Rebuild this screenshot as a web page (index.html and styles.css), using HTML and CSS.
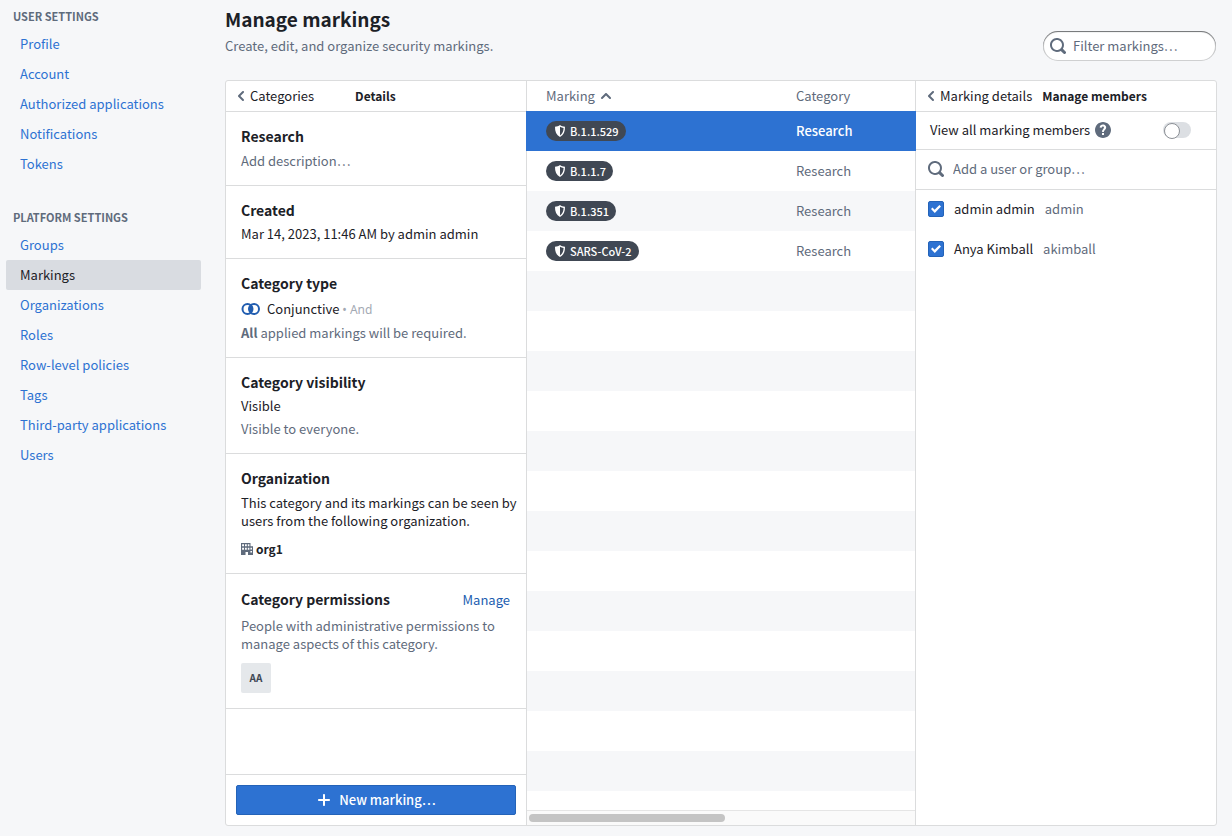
FILE: index.html
```
<!DOCTYPE html>
<html lang="en">
<head>
<meta charset="utf-8">
<title>Manage markings</title>
<link rel="stylesheet" href="styles.css">
</head>
<body>
<svg class="sprite" aria-hidden="true">
  <symbol id="i-search" viewBox="0 0 16 16"><path d="M15.55 13.43l-2.67-2.68a6.94 6.94 0 001.11-3.76c0-3.87-3.13-7-7-7s-7 3.13-7 7 3.13 7 7 7c1.39 0 2.68-.42 3.76-1.11l2.68 2.67a1.498 1.498 0 102.12-2.12zm-8.56-1.44c-2.76 0-5-2.24-5-5s2.24-5 5-5 5 2.24 5 5-2.24 5-5 5z"/></symbol>
  <symbol id="i-left" viewBox="0 0 16 16"><path d="M7.41 8l3.29-3.29c.19-.18.3-.43.3-.71a1.003 1.003 0 00-1.71-.71l-4 4C5.11 7.47 5 7.72 5 8c0 .28.11.53.29.71l4 4a1.003 1.003 0 001.42-1.42L7.41 8z"/></symbol>
  <symbol id="i-up" viewBox="0 0 16 16"><path d="M12.71 9.29l-4-4C8.53 5.11 8.28 5 8 5s-.53.11-.71.29l-4 4a1.003 1.003 0 001.42 1.42L8 7.41l3.29 3.29c.18.19.43.3.71.3a1.003 1.003 0 00.71-1.71z"/></symbol>
  <symbol id="i-plus" viewBox="0 0 16 16"><path d="M13 7H9V3c0-.55-.45-1-1-1s-1 .45-1 1v4H3c-.55 0-1 .45-1 1s.45 1 1 1h4v4c0 .55.45 1 1 1s1-.45 1-1V9h4c.55 0 1-.45 1-1s-.45-1-1-1z"/></symbol>
  <symbol id="i-help" viewBox="0 0 16 16"><path d="M8 0C3.58 0 0 3.58 0 8s3.58 8 8 8 8-3.58 8-8-3.58-8-8-8zM7 13v-2h2v2H7zm3.93-6.48c-.14.32-.35.64-.62.97L9.25 8.83c-.12.15-.24.29-.28.42-.04.13-.09.3-.09.52V10H7.12V8.88s.05-.51.21-.71L8.4 6.73c.22-.26.35-.49.44-.68.09-.19.12-.38.12-.58 0-.3-.1-.55-.28-.75-.18-.19-.44-.28-.76-.28-.33 0-.59.1-.78.29-.19.19-.33.46-.4.81-.03.11-.1.15-.2.14l-1.7-.25c-.12-.01-.16-.08-.14-.19.12-.82.46-1.47 1.03-1.94.57-.48 1.32-.72 2.25-.72.47 0 .9.07 1.29.22s.72.34 1 .59c.28.25.49.55.65.89.15.35.22.72.22 1.12s-.07.75-.21 1.08z"/></symbol>
  <symbol id="i-shield" viewBox="0 0 12 12"><path fill-rule="evenodd" d="M6 0C4.800 1 2.800 1.700 1 1.700C.8 6.500 2.400 10 6 12C9.600 10 11.200 6.500 11 1.700C9.200 1.700 7.200 1 6 0ZM6 1.800C7 2.500 8.300 2.900 9.600 3.100C9.500 6.500 8.500 8.800 6 10.400Z"/></symbol>
  <symbol id="i-join" viewBox="0 0 20 14"><path d="M9.750 2.500a6 6 0 0 1 0 9a6 6 0 0 1 0-9z"/><circle cx="6.500" cy="7" r="5" fill="none" stroke="currentColor" stroke-width="2"/><circle cx="13" cy="7" r="5" fill="none" stroke="currentColor" stroke-width="2"/></symbol>
  <symbol id="i-office" viewBox="0 0 12 12"><path fill-rule="evenodd" d="M0 0H9.500V3.200H12V12H7V9H4.500V12H0ZM1.100 1.200V3.200H3V1.200ZM4 1.200V3.200H5.800V1.200ZM6.800 1.200V3.200H8.400V1.200ZM1.100 4.800V6.800H3V4.800ZM4 4.800V6.800H5.800V4.800ZM6.800 4.800V6.800H8.400V4.800ZM9.400 4.800V6.500H11V4.800ZM9.400 8V9.500H11V8Z"/></symbol>
</svg>
<div class="page">
  <nav class="sidebar" aria-label="Settings">
    <section>
      <h2 class="nav-title">USER SETTINGS</h2>
      <a class="nav-item" href="#">Profile</a>
      <a class="nav-item" href="#">Account</a>
      <a class="nav-item" href="#">Authorized applications</a>
      <a class="nav-item" href="#">Notifications</a>
      <a class="nav-item" href="#">Tokens</a>
    </section>
    <section>
      <h2 class="nav-title">PLATFORM SETTINGS</h2>
      <a class="nav-item" href="#">Groups</a>
      <a class="nav-item current" href="#" aria-current="page">Markings</a>
      <a class="nav-item" href="#">Organizations</a>
      <a class="nav-item" href="#">Roles</a>
      <a class="nav-item" href="#">Row-level policies</a>
      <a class="nav-item" href="#">Tags</a>
      <a class="nav-item" href="#">Third-party applications</a>
      <a class="nav-item" href="#">Users</a>
    </section>
  </nav>
  <main class="main">
    <header class="page-head">
      <div>
        <h1 class="page-title">Manage markings</h1>
        <p class="muted">Create, edit, and organize security markings.</p>
      </div>
      <label class="filter">
        <svg class="icon"><use href="#i-search"/></svg>
        <input type="search" placeholder="Filter markings…" aria-label="Filter markings">
      </label>
    </header>
    <div class="frame">
      <section class="pane details">
        <header class="pane-head wide">
          <button class="back" type="button"><svg class="icon"><use href="#i-left"/></svg>Categories</button>
          <h2 class="pane-title">Details</h2>
        </header>
        <div class="details-body">
          <section class="block">
            <h3 class="block-title">Research</h3>
            <p class="muted">Add description…</p>
          </section>
          <section class="block tight">
            <h3 class="block-title">Created</h3>
            <p>Mar 14, 2023, 11:46 AM by admin admin</p>
          </section>
          <section class="block loose">
            <h3 class="block-title">Category type</h3>
            <p class="type"><svg class="join"><use href="#i-join"/></svg><span>Conjunctive <span class="faint">• And</span></span></p>
            <p class="muted"><strong>All</strong> applied markings will be required.</p>
          </section>
          <section class="block tight">
            <h3 class="block-title">Category visibility</h3>
            <p>Visible</p>
            <p class="muted">Visible to everyone.</p>
          </section>
          <section class="block">
            <h3 class="block-title">Organization</h3>
            <p>This category and its markings can be seen by users from the following organization.</p>
            <p class="org"><svg class="office"><use href="#i-office"/></svg><strong>org1</strong></p>
          </section>
          <section class="block loose">
            <div class="block-row">
              <h3 class="block-title">Category permissions</h3>
              <a class="manage" href="#">Manage</a>
            </div>
            <p class="muted">People with administrative permissions to manage aspects of this category.</p>
            <span class="avatar">AA</span>
          </section>
        </div>
        <footer class="pane-foot">
          <button class="primary" type="button"><svg class="icon"><use href="#i-plus"/></svg>New marking…</button>
        </footer>
      </section>
      <section class="pane list">
        <div class="stripes">
          <table class="markings">
            <thead>
              <tr><th class="col-marking" scope="col"><span class="sort">Marking <svg class="icon"><use href="#i-up"/></svg></span></th><th scope="col">Category</th></tr>
            </thead>
            <tbody>
              <tr class="selected"><td><span class="pill"><svg><use href="#i-shield"/></svg>B.1.1.529</span></td><td>Research</td></tr>
              <tr><td><span class="pill"><svg><use href="#i-shield"/></svg>B.1.1.7</span></td><td>Research</td></tr>
              <tr><td><span class="pill"><svg><use href="#i-shield"/></svg>B.1.351</span></td><td>Research</td></tr>
              <tr><td><span class="pill"><svg><use href="#i-shield"/></svg>SARS-CoV-2</span></td><td>Research</td></tr>
            </tbody>
          </table>
        </div>
        <div class="scroll"><div class="thumb"></div></div>
      </section>
      <section class="pane members">
        <header class="pane-head">
          <button class="back" type="button"><svg class="icon"><use href="#i-left"/></svg>Marking details</button>
          <h2 class="pane-title">Manage members</h2>
        </header>
        <div class="view-all">
          <label for="view-all">View all marking members</label>
          <svg class="icon"><use href="#i-help"/></svg>
          <input class="switch" id="view-all" type="checkbox" role="switch">
        </div>
        <label class="add">
          <svg class="icon"><use href="#i-search"/></svg>
          <input type="text" placeholder="Add a user or group…" aria-label="Add a user or group">
        </label>
        <label class="member"><input class="check" type="checkbox" checked><span>admin admin</span><span class="muted">admin</span></label>
        <label class="member"><input class="check" type="checkbox" checked><span>Anya Kimball</span><span class="muted">akimball</span></label>
      </section>
    </div>
  </main>
</div>
</body>
</html>
```
FILE: styles.css
```
* { box-sizing: border-box; }
body {
  margin: 0;
  background: #f6f7f9;
  color: #1c2127;
  font: 13px/18px "Noto Sans CJK SC", "Noto Sans CJK JP", "Noto Sans", sans-serif;
}
h1, h2, h3, p { margin: 0; }
a { text-decoration: none; }
button, input { font: inherit; color: inherit; }
button { padding: 0; border: 0; background: none; }
input::placeholder { color: #5f6b7c; opacity: 1; }
.sprite { display: none; }
.icon { width: 16px; height: 16px; flex: none; fill: #5f6b7c; }
.muted { color: #5f6b7c; }
.faint { color: #a3a9b3; font-family: "Noto Sans", sans-serif; font-size: 12px; }

.page { display: flex; min-height: 100vh; }
.sidebar {
  display: flex;
  flex-direction: column;
  gap: 28px;
  flex: none;
  width: 201px;
  padding: 6px 0 0 6px;
}
.nav-title {
  margin-bottom: 3px;
  padding-left: 7px;
  color: #5f6b7c;
  font-size: 11px;
  line-height: 20px;
}
.nav-item {
  display: block;
  padding-left: 14px;
  border-radius: 2px;
  color: #2d72d2;
  line-height: 30px;
}
.nav-item.current { background: #d9dce1; color: #1c2127; }

.main {
  display: flex;
  flex-direction: column;
  flex: 1;
  min-width: 0;
  padding: 0 15px 10px 24px;
}
.page-head { display: flex; justify-content: space-between; height: 80px; padding-top: 5px; }
.page-title { margin-bottom: 4px; font-size: 19px; line-height: 28px; }
.filter {
  display: flex;
  align-items: center;
  gap: 7px;
  width: 173px;
  height: 30px;
  margin: 26px 1px 0 0;
  padding: 0 7px;
  border-radius: 15px;
  background: #fff;
  box-shadow: inset 0 0 0 1px rgba(17, 20, 24, .2), inset 0 1px 1px rgba(17, 20, 24, .5);
}
.filter input, .add input {
  flex: 1;
  min-width: 0;
  padding: 0;
  border: 0;
  outline: 0;
  background: none;
}

.frame {
  display: flex;
  flex: 1;
  border: 1px solid #dbdcdd;
  border-radius: 3px;
  background: #fff;
}
.pane { display: flex; flex-direction: column; }
.details { flex: none; width: 301px; border-right: 1px solid #dbdcdd; }
.list { position: relative; flex: 1; min-width: 0; }
.members { flex: none; width: 301px; border-left: 1px solid #dbdcdd; }

.pane-head {
  display: flex;
  align-items: center;
  gap: 10px;
  height: 31px;
  padding-left: 7px;
  border-bottom: 1px solid #dbdcdd;
}
.pane-head.wide { gap: 41px; }
.back { display: flex; align-items: center; gap: 1px; }
.pane-title { font-size: 12px; line-height: 18px; }

.details-body { flex: 1; }
.block {
  display: flex;
  flex-direction: column;
  gap: 5px;
  padding: 15px 8px 15px 15px;
  border-bottom: 1px solid #dbdcdd;
}
.block.tight { gap: 4px; }
.block.tight p + p { margin-top: 1px; }
.block.loose { gap: 6px; }
.block-title { padding-bottom: 2px; font-size: 14px; line-height: 18px; }
.block-row { display: flex; align-items: center; justify-content: space-between; height: 22px; padding-right: 8px; }
.type { display: flex; align-items: center; gap: 6px; height: 18px; }
.join { width: 20px; height: 14px; color: #215db0; fill: currentColor; }
.org { display: flex; align-items: center; gap: 3px; margin-top: 5px; }
.org strong { font-size: 12px; }
.office { width: 12px; height: 12px; fill: #5f6b7c; }
.manage { color: #215db0; }
.avatar {
  width: 30px;
  margin-top: 4px;
  border-radius: 2px;
  background: #e5e8eb;
  color: #404854;
  font-size: 10px;
  font-weight: 700;
  line-height: 30px;
  text-align: center;
}
.pane-foot { padding: 10px; border-top: 1px solid #dbdcdd; }
.primary {
  display: flex;
  align-items: center;
  justify-content: center;
  gap: 7px;
  width: 100%;
  height: 30px;
  border: 1px solid #2463b8;
  border-radius: 2px;
  background: #2d72d2;
  color: #fff;
  font-weight: 500;
}
.primary .icon { fill: #fff; }

.stripes {
  flex: 1;
  background: linear-gradient(#f6f7f9 50%, #fff 50%) 0 30px / 100% 80px;
}
.markings { width: 100%; border-collapse: collapse; table-layout: fixed; }
.markings th, .markings td { padding: 0 0 0 19px; text-align: left; color: #5f6b7c; }
.markings th { height: 30px; background: #fff; font-weight: 400; }
.markings td { height: 40px; }
.col-marking { width: 250px; }
.sort { display: flex; align-items: center; gap: 3px; }
.markings .selected { background: #2d72d2; box-shadow: -1px 0 #2d72d2, 1px 0 #2d72d2; }
.markings .selected td { color: #fff; font-weight: 500; }
.pill {
  display: inline-flex;
  align-items: center;
  gap: 4px;
  height: 20px;
  padding: 0 7px 0 8px;
  border-radius: 10px;
  background: #404854;
  color: #fff;
  font-size: 11px;
  font-weight: 500;
  vertical-align: middle;
}
.pill svg { width: 12px; height: 12px; fill: #fff; }
.scroll { height: 15px; padding: 3px 2px; border-top: 1px solid #e5e5e5; background: #fafafa; }
.thumb { width: 51%; height: 8px; border-radius: 4px; background: #c4c4c4; }

.view-all {
  display: flex;
  align-items: center;
  gap: 5px;
  height: 38px;
  padding: 0 25px 1px 14px;
  border-bottom: 1px solid #dbdcdd;
}
.switch {
  appearance: none;
  width: 28px;
  height: 16px;
  margin: 0 0 0 auto;
  padding: 1px;
  border-radius: 8px;
  background: #dcdfe3;
}
.switch::before {
  content: "";
  display: block;
  width: 14px;
  height: 14px;
  border: 1px solid #8b8f95;
  border-radius: 50%;
  background: #fff;
}
.add {
  display: flex;
  align-items: center;
  gap: 9px;
  height: 40px;
  padding: 0 12px 1px;
  border-bottom: 1px solid #dbdcdd;
}
.member { display: flex; align-items: center; gap: 10px; height: 40px; padding: 0 12px 2px; }
.check {
  appearance: none;
  display: grid;
  place-items: center;
  width: 16px;
  height: 16px;
  margin: 0;
  border: 1px solid #2463b8;
  border-radius: 2px;
  background: #2d72d2;
}
.check::before {
  content: "";
  width: 10px;
  height: 8px;
  background: #fff;
  clip-path: polygon(0 50%, 15% 32%, 36% 58%, 84% 0, 100% 18%, 38% 100%);
}
```
